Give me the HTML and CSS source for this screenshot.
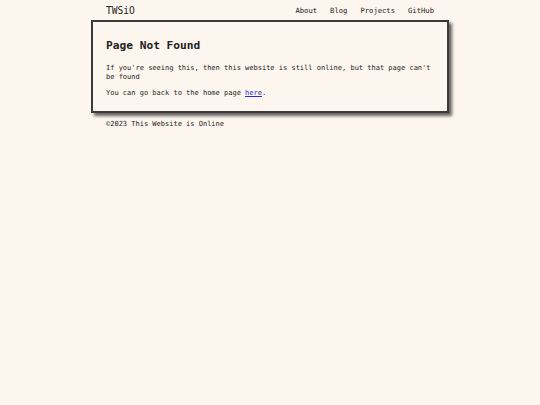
FILE: index.html
```html
<!DOCTYPE html>
<html>
<head>
<meta charset="utf-8">
<link rel="stylesheet" href="styles.css">
</head>
<body>
<div class="page">
  <header class="header">
    <a class="brand" href="#">TWSiO</a>
    <nav class="nav">
      <a href="#">About</a>
      <a href="#">Blog</a>
      <a href="#">Projects</a>
      <a href="#">GitHub</a>
    </nav>
  </header>
  <main class="card">
    <h1 class="title">Page Not Found</h1>
    <p class="text">If you're seeing this, then this website is still online, but that page can't be found</p>
    <p class="text">You can go back to the home page <a class="link" href="#">here</a>.</p>
  </main>
  <footer class="footer">©2023 This Website is Online</footer>
</div>
</body>
</html>
```

FILE: styles.css
```css
html, body {
  margin: 0;
  padding: 0;
  background: #fdf6ee;
}
body {
  font-family: "DejaVu Sans Mono", "Liberation Mono", monospace;
  color: #222;
}
.page {
  width: 358px;
  margin: 0 auto;
}
.header {
  display: flex;
  justify-content: space-between;
  align-items: center;
  height: 20px;
  padding: 0 15px 0 15px;
}
.brand {
  font-size: 9.6px;
  color: #222;
  text-decoration: none;
}
.nav {
  display: flex;
  gap: 13px;
}
.nav a {
  font-size: 7.2px;
  color: #222;
  text-decoration: none;
}
.card {
  border: 2px solid #3a3a3a;
  box-shadow: 3px 3px 3px rgba(0, 0, 0, 0.6);
  padding: 16px 14px 13px 13px;
}
.title {
  margin: 0 0 11px 0;
  font-size: 11.2px;
  line-height: 15px;
  font-weight: bold;
}
.text {
  margin: 0 0 7px 0;
  font-size: 7px;
  line-height: 9px;
}
.text:last-child {
  margin-bottom: 0;
}
.link {
  color: #2a2ad0;
}
.footer {
  padding: 7px 15px;
  font-size: 7px;
  line-height: 9px;
}
```
